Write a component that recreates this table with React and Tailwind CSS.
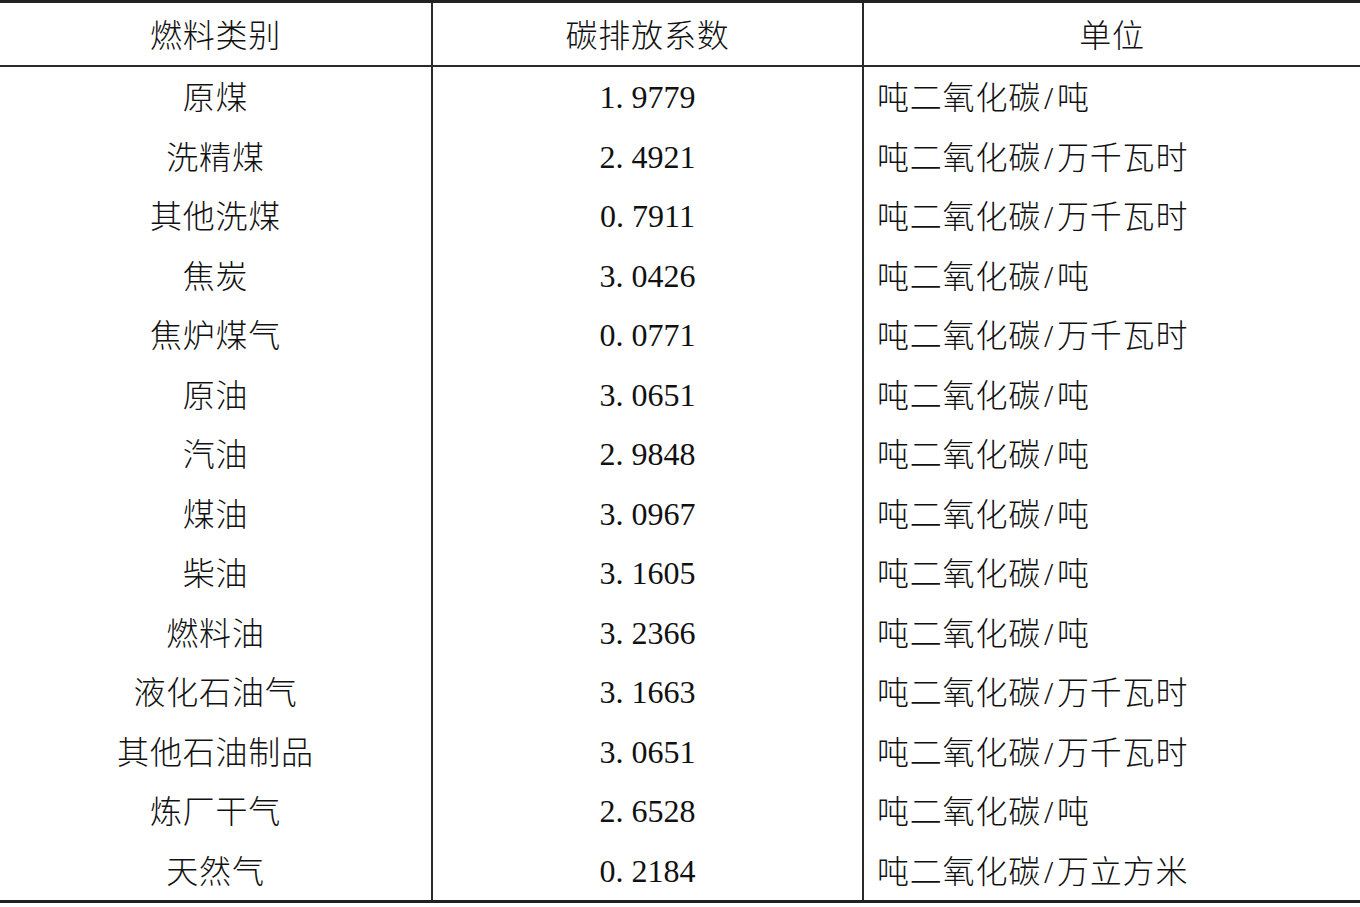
const rows = [
  ['原煤', '1. 9779', '吨二氧化碳/吨'],
  ['洗精煤', '2. 4921', '吨二氧化碳/万千瓦时'],
  ['其他洗煤', '0. 7911', '吨二氧化碳/万千瓦时'],
  ['焦炭', '3. 0426', '吨二氧化碳/吨'],
  ['焦炉煤气', '0. 0771', '吨二氧化碳/万千瓦时'],
  ['原油', '3. 0651', '吨二氧化碳/吨'],
  ['汽油', '2. 9848', '吨二氧化碳/吨'],
  ['煤油', '3. 0967', '吨二氧化碳/吨'],
  ['柴油', '3. 1605', '吨二氧化碳/吨'],
  ['燃料油', '3. 2366', '吨二氧化碳/吨'],
  ['液化石油气', '3. 1663', '吨二氧化碳/万千瓦时'],
  ['其他石油制品', '3. 0651', '吨二氧化碳/万千瓦时'],
  ['炼厂干气', '2. 6528', '吨二氧化碳/吨'],
  ['天然气', '0. 2184', '吨二氧化碳/万立方米'],
]

const font = { fontFamily: '"Liberation Serif", "Noto Sans CJK SC", serif' }

function Unit({ text }) {
  const [a, b] = text.split('/')
  return (
    <span className="tracking-[0.8px]">
      {a}
      <span className="inline-block w-[16px] text-center">/</span>
      {b}
    </span>
  )
}

export default function App() {
  return (
    <div className="h-[907px] w-[1360px] bg-white text-[#111]" style={font}>
      <div className="border-t-[3px] border-b-[3px] border-[#222]">
        <div className="grid h-[64px] grid-cols-[433px_431px_1fr] items-center border-b-2 border-[#2a2a2a] text-[32px] font-light">
          <div className="flex h-full items-center justify-center border-r-2 border-[#2a2a2a] pt-[3px] tracking-[0.8px]">燃料类别</div>
          <div className="flex h-full items-center justify-center border-r-2 border-[#2a2a2a] pt-[3px] tracking-[0.8px]">碳排放系数</div>
          <div className="flex h-full items-center justify-center pt-[3px] tracking-[0.8px]">单位</div>
        </div>
        {rows.map(([name, value, unit]) => (
          <div key={name} className="grid h-[59.5px] grid-cols-[433px_431px_1fr] text-[32px] font-light">
            <div className="flex h-full items-center justify-center border-r-2 border-[#2a2a2a] pt-[3px] tracking-[0.8px]">{name}</div>
            <div className="flex h-full items-center justify-center border-r-2 border-[#2a2a2a] pt-[1px]">{value}</div>
            <div className="flex h-full items-center pl-[13px] pt-[3px]">
              <Unit text={unit} />
            </div>
          </div>
        ))}
      </div>
    </div>
  )
}
